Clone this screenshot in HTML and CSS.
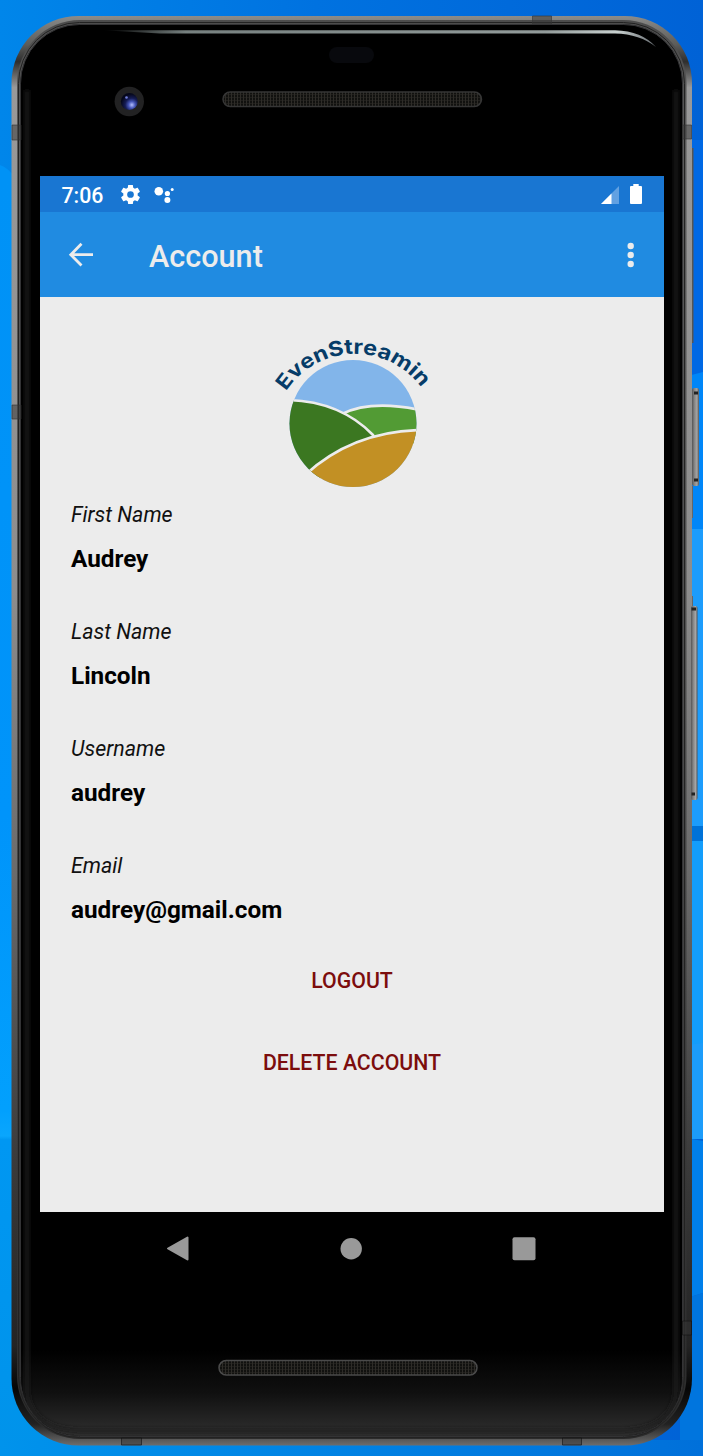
FILE: index.html
```html
<!DOCTYPE html>
<html lang="en">
<head>
<meta charset="utf-8">
<title>Account</title>
<link rel="stylesheet" href="styles.css">
</head>
<body>
<main class="stage">
  <svg class="frame" width="703" height="1456" viewBox="0 0 703 1456" aria-hidden="true">
    <defs>
      <linearGradient id="wallLeft" x1="0" y1="0" x2="0" y2="1"><stop offset="0" stop-color="#0092f6"/><stop offset=".5" stop-color="#0094fa"/><stop offset=".73" stop-color="#02a0fd"/><stop offset=".75" stop-color="#0aa6fd"/><stop offset=".753" stop-color="#0097f2"/><stop offset="1" stop-color="#0093ea"/></linearGradient>
      <linearGradient id="wallTop"><stop offset="0" stop-color="#0086ea"/><stop offset=".45" stop-color="#0072e0"/><stop offset="1" stop-color="#0062d6"/></linearGradient>
      <linearGradient id="wallBottom"><stop offset="0" stop-color="#0093ec"/><stop offset="1" stop-color="#0070da"/></linearGradient>
      <linearGradient id="rim" x1="0" y1="0" x2="0" y2="1"><stop offset="0" stop-color="#8b8b89"/><stop offset=".02" stop-color="#5c5c5a"/><stop offset=".032" stop-color="#2e2e2e"/><stop offset=".05" stop-color="#999"/><stop offset=".4" stop-color="#8d8d8d"/><stop offset=".6" stop-color="#6b6b6b"/><stop offset=".8" stop-color="#3b3b3b"/><stop offset=".93" stop-color="#242424"/><stop offset=".96" stop-color="#060606"/><stop offset=".985" stop-color="#222"/><stop offset="1" stop-color="#6d6d6d"/></linearGradient>
      <linearGradient id="rimInner" x1="0" y1="0" x2="0" y2="1"><stop offset="0" stop-color="#4c4c4c"/><stop offset=".1" stop-color="#5a5a5a"/><stop offset=".5" stop-color="#4b4b4b"/><stop offset="1" stop-color="#2b2b2b"/></linearGradient>
      <linearGradient id="chin" x1="0" y1="0" x2="0" y2="1"><stop offset="0" stop-color="#000"/><stop offset=".5" stop-color="#101010"/><stop offset="1" stop-color="#303030"/></linearGradient>
      <linearGradient id="shine"><stop offset="0" stop-color="#000"/><stop offset=".15" stop-color="#76807f"/><stop offset=".8" stop-color="#929b9a"/><stop offset=".93" stop-color="#c9d1d0"/><stop offset="1" stop-color="#666b70"/></linearGradient>
      <linearGradient id="key"><stop offset="0" stop-color="#555"/><stop offset=".35" stop-color="#858585"/><stop offset=".7" stop-color="#a5a5a5"/><stop offset="1" stop-color="#555"/></linearGradient>
      <radialGradient id="lens" cx=".65" cy=".7" r=".65"><stop offset="0" stop-color="#b5c0ff"/><stop offset=".3" stop-color="#4656b8"/><stop offset=".6" stop-color="#151c55"/><stop offset="1" stop-color="#05071a"/></radialGradient>
      <pattern id="mesh" width="3" height="3" patternUnits="userSpaceOnUse"><rect width="3" height="3" fill="#11110f"/><path d="M.5 0v3M2 1v1" stroke="#2e2c28" stroke-width="1"/></pattern>
      <filter id="soft" x="-10%" y="-10%" width="120%" height="120%"><feGaussianBlur stdDeviation="2"/></filter>
      <clipPath id="glass"><rect x="21" y="25" width="661" height="1411" rx="58"/></clipPath>
    </defs>

    <!-- wallpaper -->
    <rect width="703" height="1456" fill="url(#wallTop)"/>
    <path d="M0 165Q8 168 14 176H0z" fill="#0092f6"/>
    <rect y="176" width="100" height="1280" fill="url(#wallLeft)"/>
    <path d="M680 140H703V375L680 390z" fill="#0068e4"/>
    <path d="M680 378L703 372V530H680z" fill="#0086f8"/>
    <rect x="680" y="529" width="23" height="297" fill="#1c9cfc"/>
    <rect x="680" y="826" width="23" height="15" fill="#0072d8"/>
    <rect x="680" y="841" width="23" height="205" fill="#139dfb"/>
    <path d="M680 1046L703 1043V1139H680z" fill="#1c9cfa"/>
    <path d="M680 1137L703 1141V1293L680 1300z" fill="#007fea"/>
    <path d="M680 1300L703 1293V1456H680z" fill="#0075de"/>
    <rect y="1440" width="703" height="16" fill="url(#wallBottom)"/>

    <!-- side keys -->
    <rect x="691" y="148" width="2.500" height="195" fill="#555"/>
    <rect x="691" y="486" width="2" height="32" fill="#666"/>
    <rect x="690" y="596" width="3" height="10" fill="#666"/>
    <rect x="692" y="388" width="7" height="98" rx="2" fill="url(#key)"/>
    <path d="M694 393h4M694 480h4" stroke="#222" stroke-width="3"/>

    <!-- body -->
    <rect x="11.500" y="16" width="680.500" height="1429.500" rx="67" fill="url(#rim)"/>
    <rect x="17" y="20" width="669.500" height="1419" rx="63" fill="url(#rimInner)"/>
    <rect x="18.500" y="22.500" width="666" height="1415" rx="61" fill="none" stroke="#222"/>
    <rect x="20.500" y="24.500" width="662" height="1412" rx="59" fill="#000" stroke="#333335"/>
    <g clip-path="url(#glass)">
      <rect x="21" y="1350" width="661" height="86" fill="url(#chin)"/>
      <path d="M27 1390V90M676 90V1390Q674 1429 622 1431H80Q29 1429 27 1390" fill="none" stroke="#1e1e1e" stroke-width="4" filter="url(#soft)"/>
    </g>
    <rect x="691" y="606" width="6.500" height="194" rx="2" fill="url(#key)"/>
    <path d="M691.500 609h4.500M691.500 794h3.500" stroke="#222" stroke-width="3"/>
    <path d="M103 30.200H615Q642 31 656 47Q640 34 615 33.400H160z" fill="url(#shine)"/>
    <g fill="#333" fill-opacity=".5" stroke="#333" stroke-opacity=".6">
      <path d="M12 125h9v15h-9zM12 405h9v14h-9zM682.500 125h9v14h-9zM532.500 16v8h19v-8z"/>
      <path d="M682.500 1321h9v14h-9zM121.500 1438v7h20v-7zM562.500 1438v7h19v-7z" stroke="#111"/>
    </g>

    <!-- sensors and speakers -->
    <rect x="329" y="47" width="45" height="16" rx="8" fill="#08090d"/>
    <circle cx="129.300" cy="101.500" r="14.700" fill="#222223"/>
    <circle cx="129.300" cy="101.500" r="8.500" fill="url(#lens)"/>
    <circle cx="126.500" cy="97.500" r="1.300" fill="#7380dc"/>
    <rect x="223" y="92" width="258.500" height="14.500" rx="7.200" fill="url(#mesh)" stroke="#363636" stroke-width="1.500"/>
    <rect x="219" y="1360.500" width="258" height="14.500" rx="7.200" fill="url(#mesh)" stroke="#4a4a4a" stroke-width="1.500"/>
  </svg>

  <section class="screen">
    <header class="status">
      <span class="time">7:06</span>
      <svg class="gear" width="23" height="23" viewBox="0 0 24 24"><path fill="#fff" d="M19.430 12.980c.04-.32.07-.64.07-.98s-.03-.66-.07-.98l2.110-1.650c.19-.15.24-.42.12-.64l-2-3.460c-.12-.22-.39-.3-.61-.22l-2.490 1c-.52-.4-1.080-.73-1.690-.98l-.38-2.650C14.460 2.180 14.250 2 14 2h-4c-.25 0-.46.18-.49.42l-.38 2.650c-.61.25-1.170.59-1.690.98l-2.490-1c-.23-.09-.49 0-.61.22l-2 3.460c-.13.22-.07.49.12.64l2.110 1.650c-.04.32-.07.65-.07.98s.03.66.07.98l-2.110 1.650c-.19.15-.24.42-.12.64l2 3.460c.12.22.39.3.61.22l2.490-1c.52.4 1.080.73 1.690.98l.38 2.650c.03.24.24.42.49.42h4c.25 0 .46-.18.49-.42l.38-2.650c.61-.25 1.170-.59 1.690-.98l2.490 1c.23.09.49 0 .61-.22l2-3.460c.12-.22.07-.49-.12-.64l-2.110-1.650zM12 15.500a3.500 3.500 0 1 1 0-7 3.500 3.500 0 0 1 0 7z"/></svg>
      <svg class="assistant" width="20" height="18" viewBox="0 0 20 18" fill="#fff"><circle cx="4.800" cy="5.300" r="4.300"/><circle cx="13.400" cy="7.500" r="2.600"/><circle cx="13.400" cy="14.100" r="3"/><circle cx="18.200" cy="3.400" r="1.500"/></svg>
      <svg class="signal" width="18" height="18" viewBox="0 0 18 18"><path d="M18 0v18H0z" fill="#62a1e2"/><path d="M10.500 7.500V18H0z" fill="#fff"/></svg>
      <svg class="battery" width="12" height="20" viewBox="0 0 12 20"><path d="M3.300 0h5.400v2H11q1 0 1 1v16q0 1-1 1H1q-1 0-1-1V3q0-1 1-1h2.300z" fill="#fff"/></svg>
    </header>
    <div class="appbar">
      <svg class="back" width="26" height="26" viewBox="0 0 26 26"><path d="M25 12.700H3M13.500 1.800L2.800 12.700l10.700 10.900" fill="none" stroke="#ececec" stroke-width="2.800"/></svg>
      <h1 class="title">Account</h1>
      <svg class="more" width="8" height="26" viewBox="0 0 8 26" fill="#ececec"><circle cx="3.700" cy="4" r="3.200"/><circle cx="3.700" cy="13" r="3.200"/><circle cx="3.700" cy="22" r="3.200"/></svg>
    </div>
    <div class="content">
      <svg class="logo" width="190" height="175" viewBox="0 0 190 175">
        <defs>
          <clipPath id="disc"><circle cx="93" cy="98.500" r="63.500"/></clipPath>
          <path id="arc" d="M26 66.400A82 82 0 0 1 166 70"/>
        </defs>
        <g clip-path="url(#disc)">
          <rect width="190" height="175" fill="#82b5ea"/>
          <g stroke="#ececec" stroke-width="2.600">
            <path d="M82 89Q112 74 165 86V120H82z" fill="#529b34"/>
            <path d="M20 75Q78 74 113 110L118 122L50 160H10z" fill="#3b7721"/>
            <path d="M45 150Q95 104 168 105V175H40z" fill="#c29024"/>
          </g>
        </g>
        <text class="brand"><textPath href="#arc" textLength="159" lengthAdjust="spacingAndGlyphs">EvenStreamin</textPath></text>
      </svg>
      <dl class="fields">
        <div class="field"><dt>First Name</dt><dd>Audrey</dd></div>
        <div class="field"><dt>Last Name</dt><dd>Lincoln</dd></div>
        <div class="field"><dt>Username</dt><dd>audrey</dd></div>
        <div class="field"><dt>Email</dt><dd>audrey@gmail.com</dd></div>
      </dl>
      <div class="actions">
        <button class="action">LOGOUT</button>
        <button class="action">DELETE ACCOUNT</button>
      </div>
    </div>
    <nav class="nav">
      <svg width="24" height="26" viewBox="0 0 24 26"><path d="M2 12.500L21.500 1.500v22z" fill="#999" stroke="#999" stroke-width="2" stroke-linejoin="round"/></svg>
      <svg width="22" height="22" viewBox="0 0 22 22"><circle cx="11.200" cy="10.800" r="10.700" fill="#999"/></svg>
      <svg width="24" height="24" viewBox="0 0 24 24"><rect x=".5" y=".2" width="23" height="23" rx="2" fill="#999"/></svg>
    </nav>
  </section>
</main>
</body>
</html>
```

FILE: styles.css
```css
* { box-sizing: border-box; }
body { margin: 0; font-family: Roboto, sans-serif; }
.stage { display: grid; width: 703px; height: 1456px; overflow: hidden; }
.frame, .screen { grid-area: 1 / 1; }
.frame { display: block; }
.screen {
  z-index: 1;
  width: 624px;
  margin: 176px 0 0 40px;
  display: flex;
  flex-direction: column;
}
.screen svg { display: block; flex: none; }
.status {
  height: 36px;
  background: #1976d2;
  display: flex;
  align-items: center;
  padding: 1px 22px 0 21.500px;
  color: #fff;
}
.time { width: 57.500px; padding-top: 1px; font-size: 21.300px; font-weight: 500; }
.gear { margin-right: 12px; }
.signal { margin-left: auto; margin-right: 11px; }
.battery { margin-top: -1px; }
.appbar {
  height: 85px;
  background: #208be1;
  display: flex;
  align-items: center;
  padding: 0 29px 0 28px;
  color: #ececec;
}
.title { margin: 4px 0 0 55px; flex: 1; font-size: 30.600px; font-weight: 500; line-height: 36px; }
.content { height: 915px; background: #ececec; display: flex; flex-direction: column; }
.logo { margin: 28px 0 0 220px; }
.brand { font-family: Inter, sans-serif; font-weight: 700; font-size: 20.500px; fill: #063c68; }
.fields { margin: 0; padding: 0 31px; }
.field { height: 117px; }
dt { height: 29px; line-height: 29px; font-size: 21.400px; font-style: italic; color: #111; }
dd { margin: 15px 0 0; line-height: 30px; font-size: 24.300px; font-weight: 700; color: #000; }
.actions { display: flex; flex-direction: column; align-items: center; gap: 52px; margin-top: -2px; }
.action {
  border: 0;
  padding: 0;
  background: none;
  font: 500 21.300px/30px Roboto, sans-serif;
  color: #7c0d0d;
}
.nav { height: 73px; display: flex; align-items: center; justify-content: space-between; padding: 0 128px 0 126px; }
```
